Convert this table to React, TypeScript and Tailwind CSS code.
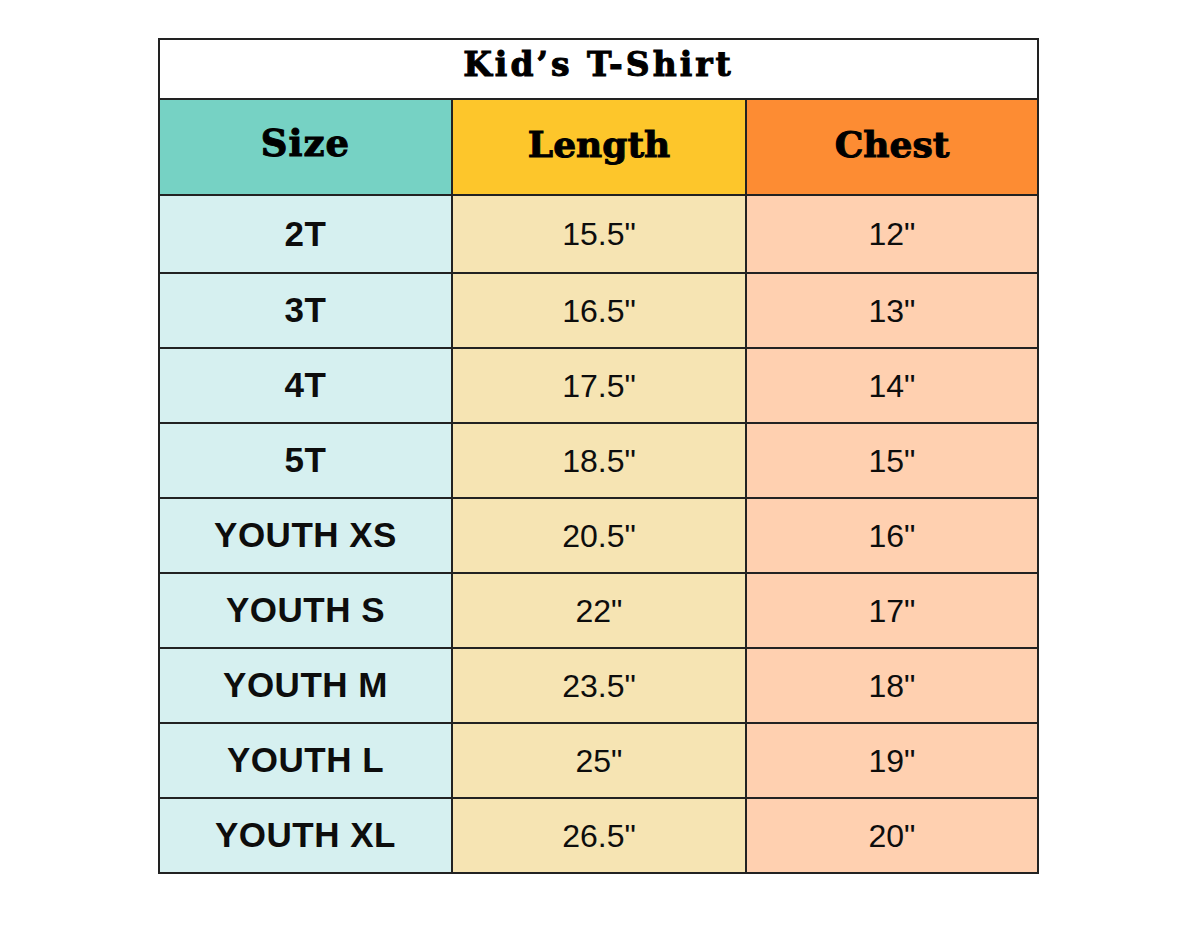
import React from "react";

interface SizeRow {
  size: string;
  length: string;
  chest: string;
}

const rows: SizeRow[] = [
  { size: "2T", length: '15.5"', chest: '12"' },
  { size: "3T", length: '16.5"', chest: '13"' },
  { size: "4T", length: '17.5"', chest: '14"' },
  { size: "5T", length: '18.5"', chest: '15"' },
  { size: "YOUTH XS", length: '20.5"', chest: '16"' },
  { size: "YOUTH S", length: '22"', chest: '17"' },
  { size: "YOUTH M", length: '23.5"', chest: '18"' },
  { size: "YOUTH L", length: '25"', chest: '19"' },
  { size: "YOUTH XL", length: '26.5"', chest: '20"' },
];

// heavy rounded serif stand-in for the Cooper-style headings
const display = "font-['DejaVu_Serif',serif] font-bold text-black [-webkit-text-stroke:1px_black]";
const body = "font-['Liberation_Sans',Arial,sans-serif] text-[#0d0d0d]";

const App = () => {
  return (
    <div className="min-h-[933px] w-[1200px] bg-white pl-[158px] pt-[38px]">
      <div className="w-[881px] border-2 border-[#222]">
        {/* Title */}
        <div className={`flex h-[60px] items-center justify-center border-b-2 border-[#222] pb-[8px] text-[33px] tracking-[3px] ${display}`}>
          Kid’s T-Shirt
        </div>

        {/* Header */}
        <div className="grid grid-cols-[293px_294px_290px] border-b-2 border-[#222]">
          <div className={`flex h-[94px] items-center justify-center border-r-2 border-[#222] bg-[#76d2c4] pb-[6px] text-[37px] tracking-[1px] ${display}`}>
            Size
          </div>
          <div className={`flex h-[94px] items-center justify-center border-r-2 border-[#222] bg-[#fdc62b] pb-[6px] text-[36px] ${display}`}>
            Length
          </div>
          <div className={`flex h-[94px] items-center justify-center bg-[#fd8c33] pb-[6px] text-[36px] ${display}`}>
            Chest
          </div>
        </div>

        {/* Rows */}
        {rows.map((row, i) => {
          const last = i === rows.length - 1;
          const h = i === 0 ? "h-[78px]" : last ? "h-[73px]" : "h-[75px]";
          return (
            <div
              key={row.size}
              className={`grid grid-cols-[293px_294px_290px] ${h} ${last ? "" : "border-b-2 border-[#222]"}`}
            >
              <div className={`flex items-center justify-center border-r-2 border-[#222] bg-[#d6f0f0] text-[35px] font-bold tracking-[0.5px] ${body}`}>
                {row.size}
              </div>
              <div className={`flex items-center justify-center border-r-2 border-[#222] bg-[#f6e4b3] text-[32px] ${body}`}>
                {row.length}
              </div>
              <div className={`flex items-center justify-center bg-[#ffd0b0] text-[32px] ${body}`}>
                {row.chest}
              </div>
            </div>
          );
        })}
      </div>
    </div>
  );
};

export default App;
